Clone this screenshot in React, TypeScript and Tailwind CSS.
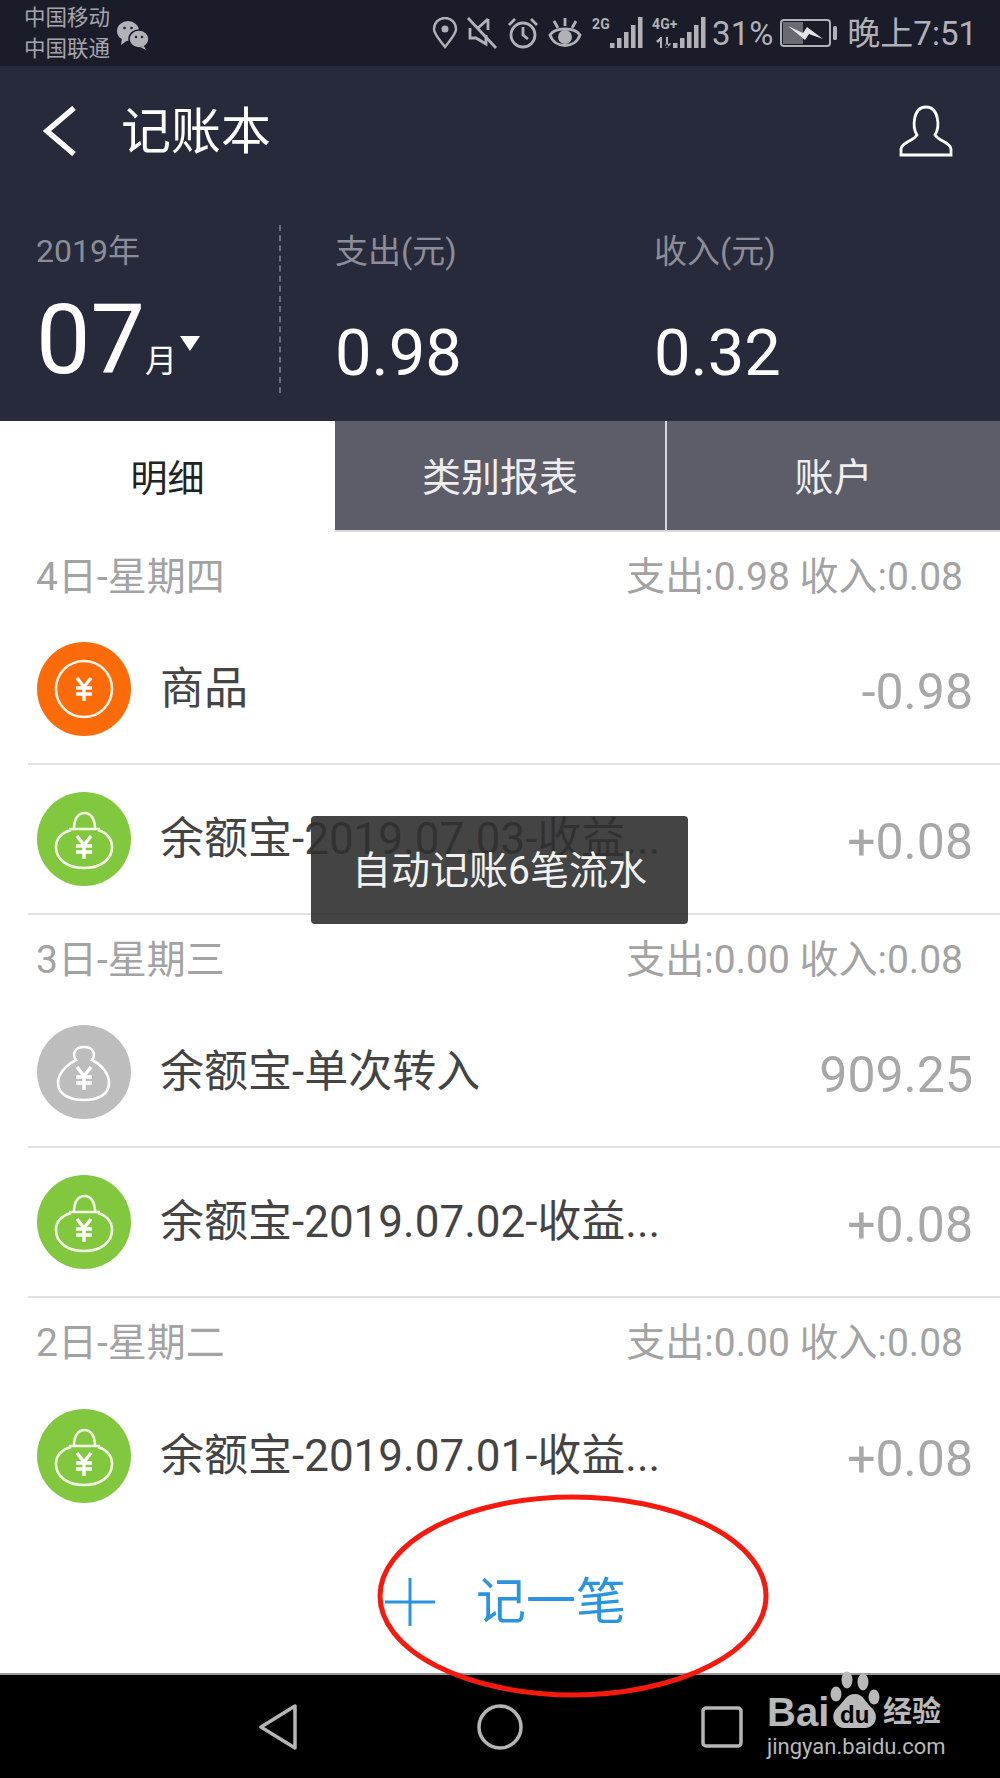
const FONT = "font-['Roboto','Noto_Sans_CJK_SC',sans-serif]";

type Entry = {
  icon: "coin" | "bag" | "sack";
  title: string;
  amount: string;
};

type Day = {
  label: string;
  summary: string;
  entries: Entry[];
};

const DAYS: Day[] = [
  {
    label: "4日-星期四",
    summary: "支出:0.98 收入:0.08",
    entries: [
      { icon: "coin", title: "商品", amount: "-0.98" },
      { icon: "bag", title: "余额宝-2019.07.03-收益...", amount: "+0.08" },
    ],
  },
  {
    label: "3日-星期三",
    summary: "支出:0.00 收入:0.08",
    entries: [
      { icon: "sack", title: "余额宝-单次转入", amount: "909.25" },
      { icon: "bag", title: "余额宝-2019.07.02-收益...", amount: "+0.08" },
    ],
  },
  {
    label: "2日-星期二",
    summary: "支出:0.00 收入:0.08",
    entries: [{ icon: "bag", title: "余额宝-2019.07.01-收益...", amount: "+0.08" }],
  },
];

function Yen({ y }: { y: number }) {
  return (
    <g stroke="#fff" strokeWidth="3.4" fill="none">
      <path d={`M40 ${y - 11}L47 ${y - 2}L54 ${y - 11}`} />
      <path d={`M47 ${y - 2}V${y + 12}`} />
      <path d={`M39 ${y - 1}H55M39 ${y + 5}H55`} />
    </g>
  );
}

function EntryIcon({ icon }: { icon: Entry["icon"] }) {
  const fill = icon === "coin" ? "#fb6b0a" : icon === "bag" ? "#82c83f" : "#bdbdbd";
  return (
    <svg width="94" height="94" viewBox="0 0 94 94" className="shrink-0">
      <circle cx="47" cy="47" r="47" fill={fill} />
      {icon === "coin" && (
        <>
          <circle cx="47" cy="47" r="28" fill="none" stroke="#fff3e6" strokeWidth="2.6" />
          <Yen y={47} />
        </>
      )}
      {icon === "bag" && (
        <>
          <path
            d="M34 38C24 41 19 47 19 55C19 68 31 76 47 76C63 76 75 68 75 55C75 47 70 41 61 38"
            fill="none"
            stroke="#f2f9e6"
            strokeWidth="2.6"
          />
          <path
            d="M32 37H63M37 37C37 27 41 21 47.500 21C54 21 58 27 58 37"
            fill="none"
            stroke="#f2f9e6"
            strokeWidth="2.6"
          />
          <Yen y={55} />
        </>
      )}
      {icon === "sack" && (
        <>
          <path
            d="M39 35C35 30 37 22 47 22C57 22 59 30 55 35C65 40 72 49 72 58C72 69 62 75 47 75C32 75 21 69 21 58C21 49 29 40 39 35Z"
            fill="none"
            stroke="#fff"
            strokeWidth="2.6"
          />
          <Yen y={53} />
        </>
      )}
    </svg>
  );
}

function StatusIcons() {
  return (
    <div className="flex items-center text-[#b1b1b7]">
      <svg width="26" height="32" viewBox="0 0 26 32" className="mr-[8px]" fill="none" stroke="currentColor" strokeWidth="2.4">
        <path d="M13 30C7 22 2 17 2 12A11 11 0 0 1 24 12C24 17 19 22 13 30Z" />
        <circle cx="13" cy="12" r="3.500" fill="currentColor" stroke="none" />
      </svg>
      <svg width="32" height="32" viewBox="0 0 32 32" className="mr-[9px]" fill="none" stroke="currentColor" strokeWidth="2.8">
        <path d="M2 1L30 31" />
        <path d="M4 11V21H10L20 27V18M22 2L12 11M22 2V13" />
      </svg>
      <svg width="32" height="32" viewBox="0 0 32 32" className="mr-[9px]" fill="none" stroke="currentColor" strokeWidth="2.8">
        <circle cx="16" cy="18" r="12" />
        <path d="M16 10V18L21 22M2 8L8 2M30 8L24 2" />
      </svg>
      <svg width="34" height="32" viewBox="0 0 34 32" className="mr-[10px]" fill="none" stroke="currentColor" strokeWidth="2.8">
        <path d="M2 18C7 10 27 10 32 18C27 32 7 32 2 18Z" />
        <circle cx="17" cy="20" r="7" fill="currentColor" stroke="none" />
        <path d="M17 1V9M6 4L10 11M28 4L24 11" />
      </svg>
      <div className="relative mr-[8px] h-[32px] w-[52px]">
        <span className="absolute left-0 top-[-1px] text-[14px] font-bold leading-[16px]">2G</span>
        <svg width="52" height="32" viewBox="0 0 52 32" fill="currentColor">
          <rect x="18" y="26" width="4.500" height="5" />
          <rect x="25" y="21" width="4.500" height="10" />
          <rect x="32" y="15" width="4.500" height="16" />
          <rect x="39" y="8" width="4.500" height="23" />
          <rect x="46" y="0" width="4.500" height="31" />
        </svg>
      </div>
      <div className="relative mr-[6px] h-[32px] w-[54px]">
        <span className="absolute left-0 top-[-1px] text-[14px] font-bold leading-[16px]">4G+</span>
        <svg width="54" height="32" viewBox="0 0 54 32" fill="currentColor">
          <path d="M8 20H10V31H8ZM14 20H16V31H14ZM4 24L9 20L10 22L6 26ZM13 28L15 31L19 27L18 26L15 28L14 27Z" />
          <rect x="21" y="26" width="4.500" height="5" />
          <rect x="28" y="21" width="4.500" height="10" />
          <rect x="35" y="15" width="4.500" height="16" />
          <rect x="42" y="8" width="4.500" height="23" />
          <rect x="49" y="0" width="4.500" height="31" />
        </svg>
      </div>
      <span className="mr-[7px] text-[33px] leading-none">31%</span>
      <svg width="57" height="28" viewBox="0 0 57 28" className="mr-[10px]" fill="none">
        <rect x="1" y="1" width="49" height="26" rx="3" stroke="currentColor" strokeWidth="2" />
        <rect x="3" y="3" width="20" height="22" fill="#6a6a72" />
        <path d="M8 7L23 14L27 8L43 20L29 15L25 21Z" fill="#e4e4e6" />
        <rect x="53" y="7" width="4" height="14" rx="1.500" fill="currentColor" />
      </svg>
      <span className="text-[33px] leading-none">晚上7:51</span>
    </div>
  );
}

function DayGroup({ day, last }: { day: Day; last: boolean }) {
  return (
    <section>
      <div className="flex h-[83px] items-center justify-between pl-[36px] pr-[37px] pt-[8px] text-[39px] leading-none text-[#a3a3a3]">
        <span>{day.label}</span>
        <span>{day.summary}</span>
      </div>
      {day.entries.map((entry, index) => (
        <div
          key={entry.title}
          className={`ml-[28px] flex h-[150px] items-center pl-[9px] pr-[27px] ${
            last && index === day.entries.length - 1 ? "" : "border-b-2 border-[#e2e2e2]"
          }`}
        >
          <EntryIcon icon={entry.icon} />
          <span className="ml-[29px] flex-1 text-[44px] leading-none text-[#444444]">{entry.title}</span>
          <span className="pt-[5px] text-[50px] leading-none text-[#a8a8a8]">{entry.amount}</span>
        </div>
      ))}
    </section>
  );
}

export default function App() {
  return (
    <div className={`relative flex h-[1778px] w-[1000px] flex-col overflow-hidden bg-white ${FONT}`}>
      <div className="flex h-[66px] shrink-0 items-center justify-between bg-[#1a1c2a] pl-[24px] pr-[23px]">
        <div className="flex items-center">
          <div className="text-[21.500px] leading-[31px] text-[#a5a5aa]">
            <div>中国移动</div>
            <div>中国联通</div>
          </div>
          <svg width="34" height="30" viewBox="0 0 34 30" className="ml-[6px] mt-[4px]" fill="#b1b1b7">
            <ellipse cx="12" cy="11" rx="11" ry="10" />
            <path d="M6 18L5 25L12 20Z" />
            <ellipse cx="23" cy="19" rx="10" ry="9" stroke="#1a1c2a" strokeWidth="1.500" />
            <path d="M28 26L30 30L24 27Z" />
            <circle cx="8.500" cy="8" r="1.300" fill="#1a1c2a" />
            <circle cx="15.500" cy="8" r="1.300" fill="#1a1c2a" />
            <circle cx="20" cy="17" r="1.200" fill="#1a1c2a" />
            <circle cx="26" cy="17" r="1.200" fill="#1a1c2a" />
          </svg>
        </div>
        <StatusIcons />
      </div>

      <header className="flex h-[355px] shrink-0 flex-col bg-[#272a3b] text-white">
        <div className="flex h-[130px] shrink-0 items-center pl-[43px] pr-[47px]">
          <svg width="34" height="50" viewBox="0 0 34 50" fill="none" stroke="#fff" strokeWidth="5.500">
            <path d="M31 2L4 25L31 48" />
          </svg>
          <span className="ml-[44px] flex-1 pt-[2px] text-[50px] leading-none">记账本</span>
          <svg width="54" height="52" viewBox="0 0 54 52" fill="none" stroke="#fff" strokeWidth="2.800">
            <path d="M2 50V44C2 38 14 36 18 30C13 22 14 2 27 2C40 2 41 22 36 30C40 36 52 38 52 44V50Z" />
          </svg>
        </div>
        <div className="flex">
          <div className="w-[279px] shrink-0 pl-[36px] pt-[36px]">
            <div className="text-[32px] leading-[38px] text-[#8c8d96]">2019年</div>
            <div className="mt-[29px] flex items-end">
              <span className="text-[97px] leading-[82px]">07</span>
              <span className="mb-[2px] text-[32px] leading-[36px]">月</span>
              <span className="mb-[30px] ml-[3px] h-0 w-0 border-x-[10px] border-t-[15px] border-x-transparent border-t-white" />
            </div>
          </div>
          <div className="mt-[29px] h-[168px] border-l-2 border-dashed border-[#6d6f7b]" />
          <Stat label="支出(元)" value="0.98" />
          <Stat label="收入(元)" value="0.32" />
        </div>
      </header>

      <nav className="flex h-[111px] shrink-0 text-[39px]">
        <div className="flex w-[335px] items-center justify-center bg-white pt-[6px] text-[37px] text-[#222222]">明细</div>
        <div className="flex w-[332px] items-center justify-center border-b-2 border-r-2 border-[#d8d8dc] bg-[#5c5d69] pt-[6px] text-[#eeeeee]">类别报表</div>
        <div className="flex flex-1 items-center justify-center border-b-2 border-[#d8d8dc] bg-[#5c5d69] pt-[6px] text-[#eeeeee]">账户</div>
      </nav>

      <main className="shrink-0">
        {DAYS.map((day, index) => (
          <DayGroup key={day.label} day={day} last={index === DAYS.length - 1} />
        ))}
      </main>

      <div className="flex flex-1 items-center justify-center pl-[11px] text-[50px] leading-none text-[#2a94de]">
        <svg width="50" height="48" viewBox="0 0 50 48" className="mr-[41px]" stroke="currentColor" strokeWidth="3">
          <path d="M0 24H50M25 0V48" />
        </svg>
        <span>记一笔</span>
      </div>

      <div className="flex h-[105px] shrink-0 items-center border-t-2 border-[#9a9a9a] bg-black pl-[259px] pt-[1px]">
        <svg width="38" height="46" viewBox="0 0 38 46" fill="none" stroke="#b5b5b5" strokeWidth="3.500" strokeLinejoin="round">
          <path d="M36 2V44L2 23Z" />
        </svg>
        <svg width="46" height="46" viewBox="0 0 46 46" className="ml-[180px]" fill="none" stroke="#b5b5b5" strokeWidth="3.500">
          <circle cx="23" cy="23" r="21" />
        </svg>
        <svg width="42" height="42" viewBox="0 0 42 42" className="ml-[178px]" fill="none" stroke="#b5b5b5" strokeWidth="3.500">
          <rect x="2" y="2" width="38" height="38" rx="3" />
        </svg>
      </div>

      {/* toast over the list, the row title shows through it */}
      <div className="absolute left-[311px] top-[816px] flex h-[108px] w-[377px] items-center justify-center rounded-[4px] bg-[rgba(48,48,48,0.9)] text-[39px] text-[#f2f2f2]">
        <span className="pt-[3px]">自动记账6笔流水</span>
      </div>

      {/* red annotation oval */}
      <svg width="400" height="210" viewBox="0 0 400 210" className="absolute left-[375px] top-[1491px]" fill="none" stroke="#f6190e" strokeWidth="5">
        <ellipse cx="198" cy="105" rx="193" ry="99" />
      </svg>

      {/* watermark */}
      <div className="absolute left-[767px] top-[1670px] h-[100px] w-[180px] text-[#b9b9b9]">
        <span className="absolute left-0 top-[22px] font-['Liberation_Sans',sans-serif] text-[40px] font-bold leading-[40px]">Bai</span>
        <svg width="50" height="60" viewBox="0 0 50 60" className="absolute left-[63px] top-[0px]" fill="currentColor">
          <ellipse cx="6" cy="24" rx="5.500" ry="7.500" />
          <ellipse cx="17" cy="10" rx="5.500" ry="8.500" />
          <ellipse cx="33" cy="12" rx="5.500" ry="8.500" />
          <ellipse cx="44" cy="27" rx="5.500" ry="7.500" />
          <path d="M25 24C33 24 35 32 42 38C50 46 45 58 35 58H14C5 58 -1 46 7 38C14 32 16 24 25 24Z" />
        </svg>
        <span className="absolute left-[73px] top-[33px] font-['Liberation_Sans',sans-serif] text-[24px] font-bold leading-[24px] text-black">du</span>
        <span className="absolute left-[116px] top-[25px] text-[29px] font-bold leading-[34px]">经验</span>
        <span className="absolute left-0 top-[64px] text-[22px] leading-[26px]">jingyan.baidu.com</span>
      </div>
    </div>
  );
}

function Stat({ label, value }: { label: string; value: string }) {
  return (
    <div className="w-[319px] shrink-0 pl-[54px] pt-[37px]">
      <div className="text-[33px] leading-[38px] text-[#8c8d96]">{label}</div>
      <div className="mt-[47px] text-[65px] leading-[70px]">{value}</div>
    </div>
  );
}
